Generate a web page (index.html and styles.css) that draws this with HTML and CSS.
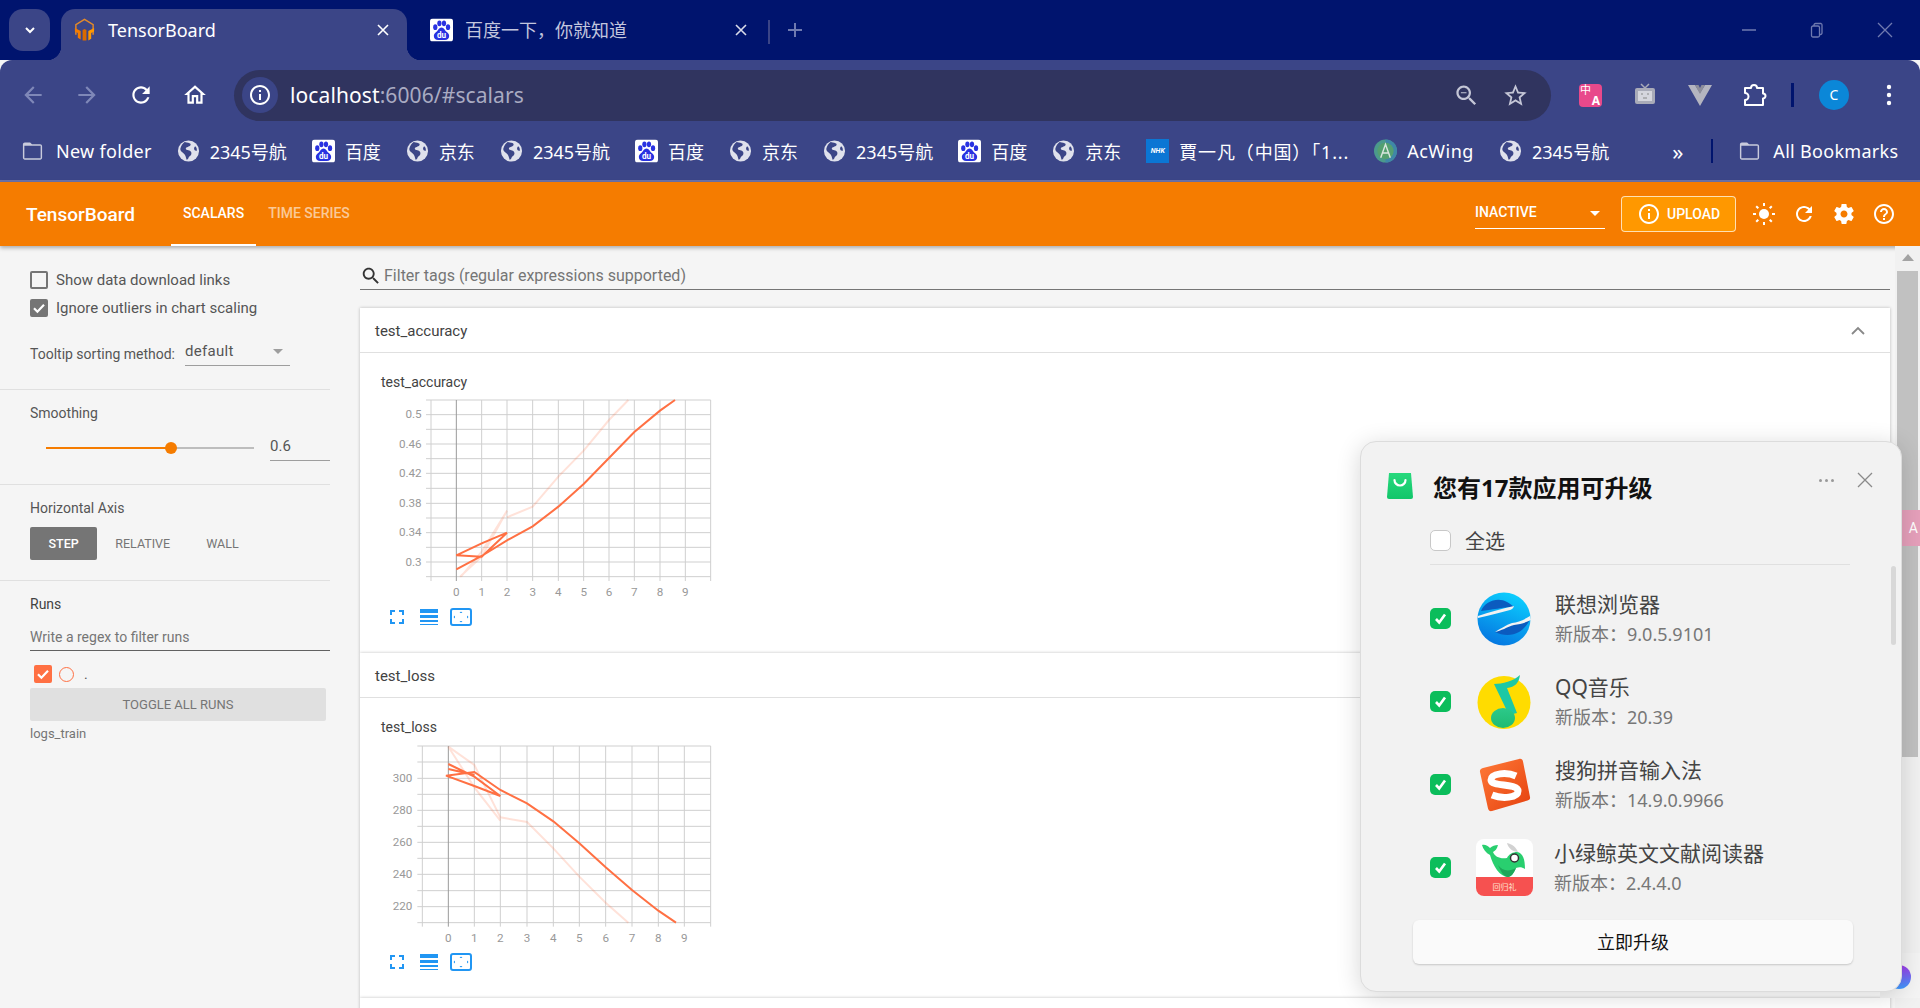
FILE: index.html
```html
<!DOCTYPE html>
<html lang="en">
<head>
    <meta charset="UTF-8">
    <meta name="viewport" content="width=device-width, initial-scale=1.0">
    <title>TensorBoard</title>
    <link rel="stylesheet" href="styles.css">
</head>
<body>
    <svg class="defs" width="0" height="0">
        <symbol id="i-paw" viewBox="0 0 24 24">
            <rect width="24" height="24" rx="3" fill="#fff"/>
            <g fill="#2932e1">
                <ellipse cx="5.500" cy="9" rx="2.200" ry="3"/>
                <ellipse cx="9.800" cy="5" rx="2.200" ry="3"/>
                <ellipse cx="14.600" cy="5" rx="2.200" ry="3"/>
                <ellipse cx="18.800" cy="9" rx="2.200" ry="3"/>
                <path d="M12 9.500c-2.600 0-3.400 3-5.200 4.400C5 15.300 4 16.500 4 18.300 4 21 6 22.500 8.500 22.500h7c2.500 0 4.500-1.500 4.500-4.200 0-1.800-1-3-2.800-4.400C15.400 12.500 14.600 9.500 12 9.500z"/>
            </g>
        </symbol>
        <symbol id="i-globe" viewBox="0 0 24 24">
            <circle cx="12" cy="12" r="11" fill="#dfe1ec"/>
            <path d="M8 2.500c3 1 5 .5 6 2 1 1.800-1.500 3-3.500 3.500-2 .6-1.500 2.500.5 3 2.500.6 4.500 1.500 4 4-.4 2-2.500 2-3 4-.2 1-.8 2-2 2-.8-2.500-1-5-3-6.500C5 13 3 12 3.500 9.500 4 6.500 6 4 8 2.500z" fill="#3b4587"/>
            <path d="M19 7c1.500 1 2 3 1.500 5-1 0-2-.5-2.500-1.500-.5-1.200 0-2.500 1-3.500z" fill="#3b4587"/>
        </symbol>
        <symbol id="i-folder" viewBox="0 0 24 24">
            <path d="M20 5h-8.500l-2-2H4C2.900 3 2 3.900 2 5v14c0 1.100.9 2 2 2h16c1.100 0 2-.9 2-2V7c0-1.100-.9-2-2-2zm.5 14.500h-17v-13h17z" fill="#c9cbdc"/>
        </symbol>
        <symbol id="i-corners" viewBox="0 0 14 14">
            <path d="M1 5V1h4M9 1h4v4M13 9v4H9M5 13H1V9" fill="none" stroke="#2196f3" stroke-width="2"/>
        </symbol>
        <symbol id="i-lines" viewBox="0 0 18 16">
            <rect y="0" width="18" height="4" fill="#2196f3"/>
            <rect y="6" width="18" height="3" fill="#2196f3"/>
            <rect y="11" width="18" height="2" fill="#2196f3"/>
            <rect y="15" width="18" height="1" fill="#2196f3"/>
        </symbol>
        <symbol id="i-fit" viewBox="0 0 22 18">
            <rect x="1" y="1" width="20" height="16" rx="2" fill="none" stroke="#2196f3" stroke-width="2"/>
            <path d="M11 3.500l1.500 1.500h-3zM11 14.500l1.500-1.500h-3zM3.500 9l1.500-1.500v3zM18.500 9l-1.500-1.500v3z" fill="#2196f3"/>
        </symbol>
        <symbol id="i-check" viewBox="0 0 18 18">
            <path d="M4 9.300l3.400 3.400L14 5.800" fill="none" stroke="#fff" stroke-width="2.200"/>
        </symbol>
        <symbol id="i-close" viewBox="0 0 12 12">
            <path d="M1 1l10 10M11 1L1 11" stroke="#fff" stroke-width="1.600"/>
        </symbol>
        <symbol id="i-green" viewBox="0 0 21 21">
            <path d="M6 11l3.200 3.500L15 6.500" fill="none" stroke="#fff" stroke-width="2.600"/>
        </symbol>
    </svg>

    <div class="tabstrip">
        <div class="tab-menu">
            <svg width="14" height="14" viewBox="0 0 14 14"><path d="M3 5l4 4 4-4" fill="none" stroke="#fff" stroke-width="2"/></svg>
        </div>
        <div class="tab tab-active">
            <svg class="tab-icon" viewBox="0 0 24 24">
                <path d="M3 17V6.500L12 1l9 5.500V17" fill="none" stroke="#e38a2a" stroke-width="1.500"/>
                <path d="M2 10l6 3v9l-3-2v-5l-3-1.500z" fill="#f57c00"/>
                <path d="M22 10l-6 3v10l3-2v-6l3-1.500z" fill="#ff9800"/>
                <path d="M10 12l2-1 2 1v11h-4z" fill="#d96a00"/>
            </svg>
            <span class="tab-title">TensorBoard</span>
            <svg class="tab-close"><use href="#i-close"/></svg>
        </div>
        <div class="tab">
            <svg class="tab-icon" viewBox="0 0 24 24"><use href="#i-paw"/><text class="du" x="12" y="20.500">du</text></svg>
            <span class="tab-title tab-title-dim">百度一下，你就知道</span>
            <svg class="tab-close tab-close-dim"><use href="#i-close"/></svg>
        </div>
        <div class="tab-sep"></div>
        <div class="tab-new">
            <svg width="16" height="16" viewBox="0 0 16 16"><path d="M8 1v14M1 8h14" stroke="#6f7ab0" stroke-width="2"/></svg>
        </div>
        <div class="win-controls">
            <svg width="16" height="16" viewBox="0 0 16 16"><path d="M1 8h14" stroke="#6f7ab0" stroke-width="1.500"/></svg>
            <svg width="16" height="16" viewBox="0 0 16 16"><path d="M5 4V3a1.500 1.500 0 0 1 1.500-1.500H12A1.500 1.500 0 0 1 13 3v8a1.500 1.500 0 0 1-1.500 1.500H11M4 4h5a1.500 1.500 0 0 1 1.500 1.500v8A1.500 1.500 0 0 1 9 15H4a1.500 1.500 0 0 1-1.500-1.500v-8A1.500 1.500 0 0 1 4 4z" fill="none" stroke="#6f7ab0" stroke-width="1.300"/></svg>
            <svg width="16" height="16" viewBox="0 0 16 16"><path d="M1 1l14 14M15 1L1 15" stroke="#6f7ab0" stroke-width="1.300"/></svg>
        </div>
    </div>

    <div class="toolbar">
        <div class="nav-row">
            <div class="nav-icons">
                <svg class="nav-icon" viewBox="0 0 24 24"><path fill="#7f88b8" d="M20 11H7.830l5.590-5.590L12 4l-8 8 8 8 1.410-1.410L7.830 13H20v-2z"/></svg>
                <svg class="nav-icon" viewBox="0 0 24 24"><path fill="#7f88b8" d="M4 11h12.170l-5.590-5.590L12 4l8 8-8 8-1.410-1.410L16.170 13H4v-2z"/></svg>
                <svg class="nav-icon" viewBox="0 0 24 24"><path fill="#fff" d="M17.650 6.350C16.200 4.900 14.210 4 12 4c-4.420 0-7.990 3.580-7.990 8s3.570 8 7.990 8c3.730 0 6.840-2.550 7.730-6h-2.080c-.82 2.330-3.040 4-5.650 4-3.310 0-6-2.690-6-6s2.690-6 6-6c1.660 0 3.140.69 4.220 1.780L13 11h7V4l-2.350 2.350z"/></svg>
                <svg class="nav-icon" viewBox="0 0 24 24"><path fill="#fff" d="M12 5.690l5 4.500V18h-2v-6H9v6H7v-7.810l5-4.500M12 3L2 12h3v8h6v-6h2v6h6v-8h3L12 3z"/></svg>
            </div>
            <div class="omnibox">
                <div class="site-info">
                    <svg width="24" height="24" viewBox="0 0 24 24"><path fill="#fff" d="M11 7h2v2h-2zm0 4h2v6h-2zm1-9C6.480 2 2 6.480 2 12s4.480 10 10 10 10-4.480 10-10S17.520 2 12 2zm0 18c-4.410 0-8-3.590-8-8s3.590-8 8-8 8 3.590 8 8-3.590 8-8 8z"/></svg>
                </div>
                <div class="url"><span class="url-host">localhost</span>:6006/#scalars</div>
                <svg class="omni-icon" viewBox="0 0 24 24"><path fill="#c4c6d6" d="M15.500 14h-.79l-.28-.27C15.410 12.590 16 11.110 16 9.500 16 5.910 13.090 3 9.500 3S3 5.910 3 9.500 5.910 16 9.500 16c1.610 0 3.090-.59 4.230-1.570l.27.28v.79l5 4.990L20.490 19l-4.990-5zm-6 0C7.010 14 5 11.990 5 9.500S7.010 5 9.500 5 14 7.010 14 9.500 11.990 14 9.500 14zM7 9h5v1H7z"/></svg>
                <svg class="omni-icon" viewBox="0 0 24 24"><path fill="#c4c6d6" d="M22 9.240l-7.190-.62L12 2 9.190 8.630 2 9.240l5.460 4.730L5.820 21 12 17.270 18.180 21l-1.630-7.030L22 9.240zM12 15.400l-3.760 2.270 1-4.280-3.320-2.880 4.380-.38L12 6.100l1.710 4.040 4.380.38-3.320 2.880 1 4.280L12 15.400z"/></svg>
            </div>
            <div class="ext-icons">
                <div class="ext-translate"><span class="ext-zh">中</span><span class="ext-a">A</span></div>
                <svg class="ext-icon" viewBox="0 0 24 24">
                    <path d="M8 1l4 4 4-4" fill="none" stroke="#a9abb8" stroke-width="1.500"/>
                    <rect x="2" y="5" width="20" height="16" rx="2" fill="#a9abb8"/>
                    <rect x="5" y="8" width="14" height="10" fill="#d5d6dd"/>
                    <path d="M8 11h2M14 11h2M10 15h4" stroke="#888" stroke-width="1.200"/>
                </svg>
                <svg class="ext-icon" viewBox="0 0 24 24">
                    <path d="M0 2h7l5 8 5-8h7L12 23z" fill="#b4b5c0"/>
                    <path d="M7 2h3.500L12 5l1.500-3H17l-5 9z" fill="#8d8e9a"/>
                </svg>
                <svg class="ext-icon" viewBox="0 0 24 24">
                    <path d="M2 5h6a3 3 0 0 1 6 0h6v5.500a2.500 2.500 0 0 1 0 5V22H2v-5a3.500 3.500 0 0 0 0-7z" fill="none" stroke="#fff" stroke-width="2" stroke-linejoin="round"/>
                </svg>
                <div class="ext-sep"></div>
                <div class="avatar">C</div>
                <svg class="ext-dots" viewBox="0 0 6 24"><circle cx="3" cy="4" r="2.200" fill="#fff"/><circle cx="3" cy="12" r="2.200" fill="#fff"/><circle cx="3" cy="20" r="2.200" fill="#fff"/></svg>
            </div>
        </div>
        <div class="bookmarks">
            <div class="bm bm-folder"><svg class="bm-icon"><use href="#i-folder"/></svg><span class="bm-wide">New folder</span></div>
            <div class="bm"><svg class="bm-icon"><use href="#i-globe"/></svg>2345号航</div>
            <div class="bm"><svg class="bm-icon" viewBox="0 0 24 24"><use href="#i-paw"/><text class="du" x="12" y="20.500">du</text></svg>百度</div>
            <div class="bm"><svg class="bm-icon"><use href="#i-globe"/></svg>京东</div>
            <div class="bm"><svg class="bm-icon"><use href="#i-globe"/></svg>2345号航</div>
            <div class="bm"><svg class="bm-icon" viewBox="0 0 24 24"><use href="#i-paw"/><text class="du" x="12" y="20.500">du</text></svg>百度</div>
            <div class="bm"><svg class="bm-icon"><use href="#i-globe"/></svg>京东</div>
            <div class="bm"><svg class="bm-icon"><use href="#i-globe"/></svg>2345号航</div>
            <div class="bm"><svg class="bm-icon" viewBox="0 0 24 24"><use href="#i-paw"/><text class="du" x="12" y="20.500">du</text></svg>百度</div>
            <div class="bm"><svg class="bm-icon"><use href="#i-globe"/></svg>京东</div>
            <div class="bm"><span class="bm-nhk">NHK</span><span class="bm-long">賈一凡（中国）「1...</span></div>
            <div class="bm">
                <svg class="bm-icon" viewBox="0 0 24 24">
                    <circle cx="12" cy="12" r="12" fill="#4b9a8c"/>
                    <path d="M12 0a12 12 0 0 1 12 12c0 6-5 12-12 12z" fill="#3f87a8"/>
                    <circle cx="12" cy="12" r="8.500" fill="#54a070"/>
                    <path d="M7 19l5-14 5 14M9 14h6" fill="none" stroke="#d9e6e0" stroke-width="1.500"/>
                </svg><span class="bm-acwing">AcWing</span>
            </div>
            <div class="bm"><svg class="bm-icon"><use href="#i-globe"/></svg>2345号航</div>
            <div class="bm-more">»</div>
            <div class="bm-sep"></div>
            <div class="bm bm-folder"><svg class="bm-icon"><use href="#i-folder"/></svg><span class="bm-wide">All Bookmarks</span></div>
        </div>
    </div>

    <header class="tb-header">
        <div class="tb-logo">TensorBoard</div>
        <div class="tb-tab tb-tab-active">SCALARS</div>
        <div class="tb-tab">TIME SERIES</div>
        <div class="tb-right">
            <div class="tb-select">INACTIVE<span class="tb-caret"></span></div>
            <div class="tb-upload">
                <svg width="24" height="24" viewBox="0 0 24 24"><path fill="#fff" d="M11 7h2v2h-2zm0 4h2v6h-2zm1-9C6.480 2 2 6.480 2 12s4.480 10 10 10 10-4.480 10-10S17.520 2 12 2zm0 18c-4.410 0-8-3.590-8-8s3.590-8 8-8 8 3.590 8 8-3.590 8-8 8z"/></svg>
                UPLOAD
            </div>
            <svg class="tb-icon" viewBox="0 0 24 24">
                <circle cx="12" cy="12" r="5" fill="#fff"/>
                <path d="M12 1v3M12 20v3M1 12h3M20 12h3M4.200 4.200l2.100 2.100M17.700 17.700l2.100 2.100M4.200 19.800l2.100-2.100M17.700 6.300l2.100-2.100" stroke="#fff" stroke-width="2"/>
            </svg>
            <svg class="tb-icon" viewBox="0 0 24 24"><path fill="#fff" d="M17.650 6.350C16.200 4.900 14.210 4 12 4c-4.420 0-7.990 3.580-7.990 8s3.570 8 7.990 8c3.730 0 6.840-2.550 7.730-6h-2.080c-.82 2.330-3.040 4-5.650 4-3.310 0-6-2.690-6-6s2.690-6 6-6c1.660 0 3.140.69 4.220 1.780L13 11h7V4l-2.350 2.350z"/></svg>
            <svg class="tb-icon" viewBox="0 0 24 24"><path fill="#fff" d="M19.430 12.980c.04-.32.07-.64.07-.98s-.03-.66-.07-.98l2.110-1.650c.19-.15.24-.42.12-.64l-2-3.460c-.12-.22-.39-.3-.61-.22l-2.490 1c-.52-.4-1.080-.73-1.690-.98l-.38-2.650C14.460 2.180 14.250 2 14 2h-4c-.25 0-.46.18-.49.42l-.38 2.650c-.61.25-1.170.59-1.690.98l-2.490-1c-.23-.09-.49 0-.61.22l-2 3.460c-.13.22-.07.49.12.64l2.110 1.650c-.04.32-.07.65-.07.98s.03.66.07.98l-2.110 1.650c-.19.15-.24.42-.12.64l2 3.460c.12.22.39.3.61.22l2.490-1c.52.4 1.080.73 1.690.98l.38 2.650c.03.24.24.42.49.42h4c.25 0 .46-.18.49-.42l.38-2.650c.61-.25 1.170-.59 1.690-.98l2.490 1c.23.09.49 0 .61-.22l2-3.460c.12-.22.07-.49-.12-.64l-2.110-1.650zM12 15.500c-1.930 0-3.500-1.570-3.500-3.500s1.570-3.500 3.500-3.500 3.500 1.570 3.500 3.500-1.570 3.500-3.500 3.500z"/></svg>
            <svg class="tb-icon" viewBox="0 0 24 24"><path fill="#fff" d="M11 18h2v-2h-2v2zm1-16C6.480 2 2 6.480 2 12s4.480 10 10 10 10-4.480 10-10S17.520 2 12 2zm0 18c-4.410 0-8-3.590-8-8s3.590-8 8-8 8 3.590 8 8-3.590 8-8 8zm0-14c-2.210 0-4 1.790-4 4h2c0-1.100.9-2 2-2s2 .9 2 2c0 2-3 1.750-3 5h2c0-2.250 3-2.500 3-5 0-2.210-1.790-4-4-4z"/></svg>
        </div>
    </header>

    <main class="tb-main">
        <aside class="sidebar">
            <section class="side-sec side-first">
                <label class="side-check"><span class="box"></span>Show data download links</label>
                <label class="side-check"><span class="box box-on"><svg><use href="#i-check"/></svg></span>Ignore outliers in chart scaling</label>
                <div class="tooltip-row">
                    <span class="tooltip-label">Tooltip sorting method:</span>
                    <div class="tooltip-select">default<span class="tooltip-caret"></span></div>
                </div>
            </section>
            <section class="side-sec">
                <div class="side-label">Smoothing</div>
                <div class="slider-row">
                    <div class="slider"><div class="slider-fill" style="width: 60%"></div></div>
                    <div class="slider-value">0.6</div>
                </div>
            </section>
            <section class="side-sec">
                <div class="side-label">Horizontal Axis</div>
                <div class="axis-btns">
                    <div class="axis-btn axis-btn-on">STEP</div>
                    <div class="axis-btn">RELATIVE</div>
                    <div class="axis-btn">WALL</div>
                </div>
            </section>
            <section class="side-sec side-last">
                <div class="side-label side-label-dark">Runs</div>
                <div class="runs-filter">Write a regex to filter runs</div>
                <div class="run-row">
                    <span class="box box-run"><svg><use href="#i-check"/></svg></span>
                    <span class="run-dot"></span>
                    <span class="run-name">.</span>
                </div>
                <div class="toggle-runs">TOGGLE ALL RUNS</div>
                <div class="run-foot">logs_train</div>
            </section>
        </aside>

        <div class="content">
            <div class="tag-filter">
                <svg width="22" height="22" viewBox="0 0 24 24"><path fill="#333" d="M15.500 14h-.79l-.28-.27C15.410 12.590 16 11.110 16 9.500 16 5.910 13.090 3 9.500 3S3 5.910 3 9.500 5.910 16 9.500 16c1.610 0 3.090-.59 4.230-1.570l.27.28v.79l5 4.990L20.490 19l-4.990-5zm-6 0C7.010 14 5 11.990 5 9.500S7.010 5 9.500 5 14 7.010 14 9.500 11.990 14 9.500 14z"/></svg>
                Filter tags (regular expressions supported)
            </div>

            <div class="card">
                <div class="card-head">test_accuracy
                    <svg class="card-chevron" width="14" height="10" viewBox="0 0 14 10"><path d="M1 8l6-6 6 6" fill="none" stroke="#888" stroke-width="1.800"/></svg>
                </div>
                <div class="card-body">
                    <div class="chart-title">test_accuracy</div>
                    <!-- viewBox units are 1/3 px -->
                    <svg class="chart" viewBox="0 105 1140 630">
                        <path class="grid" d="M213 120V663M365 120V663M441 120V663M518 120V663M595 120V663M671 120V663M747 120V663M823 120V663M900 120V663M976 120V663M1052 120V663M198 120H1052M198 164H1052M198 208H1052M198 252H1052M198 296H1052M198 340H1052M198 385H1052M198 430H1052M198 474H1052M198 518H1052M198 562H1052M198 606H1052M198 650H1052"/>
                        <path class="axis" d="M289 120V663"/>
                        <g class="labels-y">
                            <text x="185" y="175">0.5</text><text x="185" y="263">0.46</text><text x="185" y="351">0.42</text><text x="185" y="441">0.38</text><text x="185" y="529">0.34</text><text x="185" y="617">0.3</text>
                        </g>
                        <g class="labels-x">
                            <text x="289" y="707">0</text><text x="365" y="707">1</text><text x="441" y="707">2</text><text x="518" y="707">3</text><text x="595" y="707">4</text><text x="671" y="707">5</text><text x="747" y="707">6</text><text x="823" y="707">7</text><text x="900" y="707">8</text><text x="976" y="707">9</text>
                        </g>
                        <path class="line-raw" d="M303 650L365 575L441 452L365 590L300 650M441 472L518 440L595 350L671 272L747 180L805 120"/>
                        <path class="line" d="M289 628L365 588L441 541L518 499L595 440L671 372L747 294L823 216L900 152L945 120M441 518L365 550L289 586L365 590L441 518"/>
                    </svg>
                    <div class="chart-actions">
                        <svg class="act-corners"><use href="#i-corners"/></svg>
                        <svg class="act-lines"><use href="#i-lines"/></svg>
                        <svg class="act-fit"><use href="#i-fit"/></svg>
                    </div>
                </div>
            </div>

            <div class="card">
                <div class="card-head">test_loss</div>
                <div class="card-body">
                    <div class="chart-title">test_loss</div>
                    <svg class="chart" viewBox="0 120 1140 630">
                        <path class="grid" d="M187 138V680M343 138V680M421 138V680M501 138V680M580 138V680M658 138V680M737 138V680M816 138V680M895 138V680M973 138V680M1052 138V680M172 138H1052M172 186H1052M172 235H1052M172 283H1052M172 331H1052M172 379H1052M172 427H1052M172 475H1052M172 523H1052M172 572H1052M172 620H1052M172 668H1052"/>
                        <path class="axis" d="M265 138V680"/>
                        <g class="labels-y">
                            <text x="157" y="246">300</text><text x="157" y="342">280</text><text x="157" y="438">260</text><text x="157" y="534">240</text><text x="157" y="631">220</text>
                        </g>
                        <g class="labels-x">
                            <text x="265" y="725">0</text><text x="343" y="725">1</text><text x="421" y="725">2</text><text x="501" y="725">3</text><text x="580" y="725">4</text><text x="658" y="725">5</text><text x="737" y="725">6</text><text x="816" y="725">7</text><text x="895" y="725">8</text><text x="973" y="725">9</text>
                        </g>
                        <path class="line-raw" d="M265 140L343 195L421 352L501 366L580 445L658 530L737 608L805 668M265 140L343 262L421 362"/>
                        <path class="line" d="M265 192L343 230L421 288L343 258L258 227L343 216L421 270L501 310L580 364L658 430L737 502L816 570L895 632L948 668M265 207L343 225"/>
                    </svg>
                    <div class="chart-actions">
                        <svg class="act-corners"><use href="#i-corners"/></svg>
                        <svg class="act-lines"><use href="#i-lines"/></svg>
                        <svg class="act-fit"><use href="#i-fit"/></svg>
                    </div>
                </div>
            </div>
            <div class="card"><div class="card-head"></div></div>
        </div>

        <div class="scrollrail">
            <div class="scroll-up"></div>
            <div class="scroll-thumb"></div>
        </div>
    </main>

    <div class="float-translate">A</div>
    <div class="float-helper"><span class="float-blob"></span></div>

    <div class="upgrade">
        <div class="up-head">
            <svg class="up-bag" viewBox="0 0 26 26">
                <defs><linearGradient id="g-bag" x1="0" y1="0" x2="0" y2="1"><stop offset="0" stop-color="#27d97d"/><stop offset="1" stop-color="#12c66a"/></linearGradient></defs>
                <path d="M2 0h22l2 24a2 2 0 0 1-2 2H2a2 2 0 0 1-2-2z" fill="url(#g-bag)"/>
                <path d="M7.500 7a5.500 5.500 0 0 0 11 0" fill="none" stroke="#fff" stroke-width="2.200" stroke-linecap="round"/>
            </svg>
            <div class="up-title">您有17款应用可升级</div>
            <div class="up-dots"><i></i><i></i><i></i></div>
            <svg class="up-close" viewBox="0 0 16 16"><path d="M1 1l14 14M15 1L1 15" stroke="#8a8a8a" stroke-width="1.300"/></svg>
        </div>
        <div class="up-all">
            <span class="up-box"></span>全选
        </div>
        <div class="up-bar"></div>
        <div class="up-row">
            <span class="up-check"><svg><use href="#i-green"/></svg></span>
            <svg class="up-icon" viewBox="0 0 54 54">
                <defs><linearGradient id="g-lenovo" x1="0.700" y1="0" x2="0.300" y2="1"><stop offset="0" stop-color="#0bd0ff"/><stop offset="1" stop-color="#0575e0"/></linearGradient></defs>
                <circle cx="27" cy="27" r="26.500" fill="url(#g-lenovo)"/>
                <path d="M4 19C8 9 21 5 30 10c3 2 5 3 7 5-11 0-23 3-33 4z" fill="#0b5bbf"/>
                <path d="M18 40c8 4 17 4 24 0 5-3 9-8 11-13-6 3-12 4-17 5-7 2-12 6-18 8z" fill="#0b5bbf"/>
                <path d="M1 24C12 20 24 17 37 14c-1 3-2 3-4 4-10 3-20 5-32 8z" fill="#f2f2f2"/>
                <path d="M18 40c5-3 11-7 17-9 6-1 12-3 18-7l1 4c-6 3-11 4-17 5-7 2-13 6-19 7z" fill="#f2f2f2"/>
            </svg>
            <div class="up-text"><div class="up-name">联想浏览器</div><div class="up-ver">新版本：9.0.5.9101</div></div>
        </div>
        <div class="up-row">
            <span class="up-check"><svg><use href="#i-green"/></svg></span>
            <svg class="up-icon" viewBox="0 0 54 54">
                <defs><linearGradient id="g-qq" x1="0" y1="0" x2="0" y2="1"><stop offset="0" stop-color="#2cc98a"/><stop offset="1" stop-color="#1fbb72"/></linearGradient></defs>
                <circle cx="27" cy="27.500" r="26.500" fill="#ffdc00"/>
                <path d="M17 9C25 9 37 6 43 0 42 8 38 12 30 13L40 38 32 40z" fill="#1cc8a5"/>
                <ellipse cx="26" cy="43" rx="12" ry="10" fill="url(#g-qq)"/>
            </svg>
            <div class="up-text"><div class="up-name">QQ音乐</div><div class="up-ver">新版本：20.39</div></div>
        </div>
        <div class="up-row">
            <span class="up-check"><svg><use href="#i-green"/></svg></span>
            <svg class="up-icon" viewBox="0 0 54 54">
                <defs><linearGradient id="g-sogou" x1="0" y1="0" x2="1" y2="1"><stop offset="0" stop-color="#ff7a38"/><stop offset="1" stop-color="#e5410f"/></linearGradient></defs>
                <path d="M6 10L42 1c2.500-.5 3.500.5 4 2.500L53 39c.4 2-.5 3-2.500 3.500L15 53c-2 .5-3.500-.5-4-2.500L3 14c-.4-2 .8-3.500 3-4z" fill="url(#g-sogou)"/>
                <path d="M39 18C30 14 14 15 14 22c0 7 27 3 27 11 0 7-16 8-26 4" fill="none" stroke="#fff" stroke-width="7"/>
            </svg>
            <div class="up-text"><div class="up-name">搜狗拼音输入法</div><div class="up-ver">新版本：14.9.0.9966</div></div>
        </div>
        <div class="up-row">
            <span class="up-check"><svg><use href="#i-green"/></svg></span>
            <div class="up-whale">
                <svg viewBox="0 0 57 38" class="up-whale-art">
                    <path d="M6 6C9 5 12 7 14 9 16 7 19 6 22 6 21 10 19 12 17 13 19 18 24 20 31 19 33 15 37 13 41 13 47 14 49 20 49 30 46 28 43 28 40 29 38 34 35 38 32 38 24 38 17 27 14 16 10 14 7 10 6 6z" fill="#29cf6f"/>
                    <path d="M22 26C26 32 33 33 40 29 38 34 35 38 32 38 28 38 25 33 22 26z" fill="#1ea65a"/>
                    <path d="M31 4c5 1 9 4 11 9-5 0-10-4-11-9z" fill="#d2d2d2"/>
                    <circle cx="38.500" cy="19" r="4" fill="#fff" stroke="#333" stroke-width="1.500"/>
                </svg>
                <div class="up-whale-band">回归礼</div>
            </div>
            <div class="up-text"><div class="up-name">小绿鲸英文文献阅读器</div><div class="up-ver">新版本：2.4.4.0</div></div>
        </div>
        <div class="up-btn">立即升级</div>
        <div class="up-scroll"></div>
    </div>
</body>
</html>
```

FILE: styles.css
```css
* {
    box-sizing: border-box;
}

html, body {
    margin: 0;
    height: 100%;
}

body {
    position: relative;
    display: flex;
    flex-direction: column;
    height: 1008px;
    overflow: hidden;
    font-family: Roboto, "Noto Sans CJK SC", sans-serif;
    background-color: #f5f5f5;
}

.defs {
    position: absolute;
}

/* browser chrome */
.tabstrip {
    display: flex;
    height: 60px;
    padding-top: 9px;
    background-color: #00146e;
    font-family: "Noto Sans", "Noto Sans CJK SC", sans-serif;
    flex-shrink: 0;
}

.tab-menu {
    display: flex;
    justify-content: center;
    align-items: center;
    width: 41px;
    height: 42px;
    margin-left: 9px;
    border-radius: 14px;
    background-color: #3b4587;
}

.tab {
    position: relative;
    display: flex;
    align-items: center;
    width: 346px;
    margin-left: 11px;
    padding: 0 18px 9px 12px;
    color: #fff;
    font-size: 18px;
}

.tab + .tab {
    margin-left: 11px;
    width: 347px;
}

.tab-active {
    border-radius: 14px 14px 0 0;
    background-color: #3b4587;
}

.tab-active::before,
.tab-active::after {
    content: "";
    position: absolute;
    bottom: 0;
    width: 14px;
    height: 14px;
}

.tab-active::before {
    left: -14px;
    background: radial-gradient(circle at 0 0, transparent 14px, #3b4587 14.500px);
}

.tab-active::after {
    right: -14px;
    background: radial-gradient(circle at 100% 0, transparent 14px, #3b4587 14.500px);
}

.tab-icon {
    width: 23px;
    height: 24px;
    margin-right: 12px;
    flex-shrink: 0;
}

.tab-title {
    flex: 1;
    line-height: 24px;
    white-space: nowrap;
}

.tab-title-dim {
    color: #c3c6de;
}

.tab-close {
    width: 12px;
    height: 12px;
}

.tab-close-dim {
    opacity: 0.85;
}

.du {
    fill: #fff;
    font-family: Roboto, sans-serif;
    font-size: 8.500px;
    font-weight: 700;
    text-anchor: middle;
}

.tab-sep {
    width: 2px;
    height: 24px;
    margin: 11px 0 0 3px;
    background-color: #3b4587;
}

.tab-new {
    display: flex;
    align-items: center;
    height: 42px;
    margin-left: 17px;
}

.win-controls {
    display: flex;
    align-items: center;
    gap: 52px;
    height: 42px;
    margin-left: auto;
    padding-right: 27px;
}

.toolbar {
    display: flex;
    flex-direction: column;
    height: 122px;
    border-bottom: 2px solid #6a72a8;
    border-radius: 12px 12px 0 0;
    background-color: #3b4587;
    color: #fff;
    font-family: "Noto Sans", "Noto Sans CJK SC", sans-serif;
    flex-shrink: 0;
}

.nav-row {
    display: flex;
    align-items: center;
    height: 70px;
    flex-shrink: 0;
}

.nav-icons {
    display: flex;
    gap: 28px;
    width: 234px;
    padding-left: 20px;
}

.nav-icon {
    width: 26px;
    height: 26px;
}

.omnibox {
    display: flex;
    align-items: center;
    width: 1317px;
    height: 51px;
    padding: 0 22px 0 8px;
    border-radius: 26px;
    background-color: #30345f;
}

.site-info {
    display: flex;
    justify-content: center;
    align-items: center;
    width: 36px;
    height: 36px;
    border-radius: 50%;
    background-color: #3b4587;
}

.url {
    flex: 1;
    margin-left: 12px;
    font-size: 21px;
    letter-spacing: 0.1px;
    color: #a9abc2;
}

.url-host {
    color: #fff;
}

.omni-icon {
    width: 27px;
    height: 27px;
    margin-left: 22px;
}

.ext-icons {
    display: flex;
    align-items: center;
    flex: 1;
    padding-left: 28px;
}

.ext-translate {
    position: relative;
    width: 23px;
    height: 23px;
    border-radius: 4px;
    background-color: #e8498b;
    color: #fff;
}

.ext-zh {
    position: absolute;
    top: 0;
    left: 1px;
    font-size: 11px;
    line-height: 12px;
}

.ext-a {
    position: absolute;
    right: 2px;
    bottom: 0;
    font-size: 12px;
    font-weight: 700;
    line-height: 13px;
}

.ext-icon {
    width: 24px;
    height: 24px;
    margin-left: 31px;
}

.ext-sep {
    width: 3px;
    height: 24px;
    margin-left: 24px;
    background-color: #00146e;
}

.avatar {
    width: 30px;
    height: 30px;
    margin-left: 25px;
    border-radius: 50%;
    background-color: #0b87d8;
    color: #fff;
    font-size: 14px;
    line-height: 30px;
    text-align: center;
}

.ext-dots {
    width: 6px;
    height: 24px;
    margin-left: 37px;
}

.bookmarks {
    display: flex;
    align-items: center;
    gap: 25px;
    flex: 1;
    padding: 0 0 8px 21px;
    font-size: 18px;
    white-space: nowrap;
}

.bm {
    display: flex;
    align-items: center;
    gap: 10px;
}

.bm-folder {
    gap: 12px;
}

.bm-wide {
    letter-spacing: 0.3px;
}

.bm-acwing {
    letter-spacing: 0.5px;
}

.bm-long {
    letter-spacing: 0.85px;
}

.bm-icon {
    width: 23px;
    height: 24px;
}

.bm-nhk {
    width: 23px;
    height: 24px;
    background-color: #0b76d4;
    color: #fff;
    font: italic 700 7px/24px Roboto, sans-serif;
    text-align: center;
}

.bm-more {
    margin-left: 38px;
    font-size: 22px;
    line-height: 22px;
}

.bm-sep {
    width: 2px;
    height: 24px;
    margin-left: 3px;
    background-color: #00146e;
}

/* tensorboard header */
.tb-header {
    position: relative;
    display: flex;
    align-items: center;
    height: 64px;
    padding-left: 26px;
    background-color: #f57c00;
    color: #fff;
    box-shadow: 0 2px 4px rgba(0,0,0,0.3);
    flex-shrink: 0;
}

.tb-logo {
    width: 145px;
    font-size: 19px;
    font-weight: 500;
}

.tb-tab {
    display: flex;
    align-items: center;
    height: 64px;
    padding: 0 12px;
    border-bottom: 2px solid transparent;
    font-size: 14px;
    font-weight: 500;
    color: rgba(255,255,255,0.6);
}

.tb-tab-active {
    color: #fff;
    border-bottom-color: #fff;
}

.tb-right {
    display: flex;
    align-items: center;
    margin-left: auto;
    padding-right: 24px;
}

.tb-select {
    position: relative;
    width: 130px;
    height: 30px;
    border-bottom: 1px solid #fff;
    font-size: 14px;
    font-weight: 500;
    line-height: 27px;
}

.tb-caret {
    position: absolute;
    top: 12px;
    right: 5px;
    border-left: 5px solid transparent;
    border-right: 5px solid transparent;
    border-top: 5px solid #fff;
}

.tb-upload {
    display: flex;
    align-items: center;
    gap: 6px;
    width: 115px;
    height: 36px;
    margin: 0 16px;
    padding-left: 15px;
    border: 1px solid rgba(255,255,255,0.7);
    border-radius: 4px;
    background-color: #ff9800;
    font-size: 14px;
    font-weight: 500;
}

.tb-icon {
    width: 24px;
    height: 24px;
    margin-right: 16px;
}

.tb-icon:last-child {
    margin-right: 0;
}

/* main area */
.tb-main {
    display: flex;
    flex: 1;
    min-height: 0;
}

.sidebar {
    width: 340px;
    flex-shrink: 0;
    font-size: 14px;
    color: #555;
}

.side-sec {
    width: 330px;
    padding: 15px 0 20px 30px;
    border-bottom: 1px solid #e0e0e0;
}

.side-first {
    padding-top: 25px;
    padding-bottom: 23px;
}

.side-last {
    border-bottom: none;
}

.side-check {
    display: flex;
    align-items: center;
    gap: 8px;
    height: 18px;
    margin-bottom: 10px;
    font-size: 15px;
}

.box {
    display: block;
    width: 18px;
    height: 18px;
    border: 2px solid #757575;
    border-radius: 2px;
}

.box svg {
    display: block;
    width: 18px;
    height: 18px;
    margin: -2px;
}

.box-on {
    background-color: #757575;
}

.tooltip-row {
    display: flex;
    align-items: flex-end;
    margin-top: 24px;
}

.tooltip-label {
    width: 155px;
    padding-bottom: 4px;
    white-space: nowrap;
}

.tooltip-select {
    position: relative;
    width: 105px;
    height: 25px;
    border-bottom: 1px solid #9e9e9e;
    font-size: 15px;
    line-height: 20px;
    letter-spacing: 0.3px;
}

.tooltip-caret {
    position: absolute;
    top: 8px;
    right: 7px;
    border-left: 5px solid transparent;
    border-right: 5px solid transparent;
    border-top: 5px solid #9e9e9e;
}

.side-label {
    height: 16px;
    line-height: 16px;
}

.side-label-dark {
    color: #424242;
}

.slider-row {
    display: flex;
    align-items: flex-start;
    height: 27px;
    margin-top: 13px;
    margin-bottom: 3px;
}

.slider {
    position: relative;
    width: 208px;
    height: 2px;
    margin: 13px 16px 0;
    background-color: #bdbdbd;
}

.slider-fill {
    position: relative;
    height: 2px;
    background-color: #f57c00;
}

.slider-fill::after {
    content: "";
    position: absolute;
    top: -5px;
    right: -6px;
    width: 12px;
    height: 12px;
    border-radius: 50%;
    background-color: #f57c00;
}

.slider-value {
    width: 60px;
    height: 27px;
    border-bottom: 1px solid #9e9e9e;
    font-size: 15px;
    line-height: 24px;
}

.axis-btns {
    display: flex;
    margin-top: 11px;
}

.axis-btn {
    height: 33px;
    padding: 0 18px;
    border-radius: 2px;
    color: #757575;
    font-size: 12.500px;
    line-height: 34px;
}

.axis-btn-on {
    padding: 0 18.500px;
    background-color: #757575;
    color: #fff;
    font-weight: 500;
}

.runs-filter {
    height: 26px;
    margin-top: 13px;
    border-bottom: 1px solid #616161;
    color: #757575;
    line-height: 25px;
}

.run-row {
    display: flex;
    align-items: center;
    height: 18px;
    margin-top: 14px;
    padding-left: 4px;
}

.box-run {
    border-color: #ff7043;
    background-color: #ff7043;
}

.run-dot {
    width: 15px;
    height: 15px;
    margin-left: 7px;
    border: 1.500px solid #ff7043;
    border-radius: 50%;
}

.run-name {
    margin-left: 10px;
}

.toggle-runs {
    width: 296px;
    height: 33px;
    margin-top: 5px;
    border-radius: 2px;
    background-color: #e0e0e0;
    color: #757575;
    font-size: 13px;
    line-height: 34px;
    text-align: center;
}

.run-foot {
    margin-top: 5px;
    color: #757575;
    font-size: 13px;
    line-height: 16px;
}

.content {
    flex: 1;
    min-width: 0;
    padding: 0 5px 0 20px;
}

.tag-filter {
    display: flex;
    align-items: center;
    gap: 2px;
    height: 44px;
    padding-top: 16px;
    border-bottom: 1px solid #757575;
    margin-bottom: 18px;
    font-size: 16px;
    color: #757575;
}

.card {
    background-color: #fff;
    box-shadow: 0 0 3px rgba(0,0,0,0.25);
}

.card-head {
    display: flex;
    align-items: center;
    justify-content: space-between;
    height: 45px;
    padding: 2px 25px 0 15px;
    border-bottom: 1px solid #e0e0e0;
    font-size: 15px;
    color: #424242;
}

.card-body {
    height: 300px;
    padding-top: 19px;
}

.chart-title {
    padding-left: 21px;
    color: #424242;
    font-size: 14px;
    line-height: 20px;
}

.chart {
    display: block;
    width: 380px;
    height: 210px;
    margin-top: 3px;
}

.grid {
    fill: none;
    stroke: #cfcfcf;
    stroke-width: 3;
}

.axis {
    stroke: #9a9a9a;
    stroke-width: 3;
}

.labels-y text,
.labels-x text {
    fill: #999;
    font-size: 35px;
}

.labels-y text {
    text-anchor: end;
}

.labels-x text {
    text-anchor: middle;
}

.line,
.line-raw {
    fill: none;
    stroke: #ff7043;
    stroke-width: 6;
}

.line-raw {
    stroke-opacity: 0.2;
}

.chart-actions {
    display: flex;
    align-items: center;
    gap: 16px;
    height: 24px;
    padding-left: 30px;
}

.act-corners {
    width: 14px;
    height: 14px;
}

.act-lines {
    width: 18px;
    height: 16px;
}

.act-fit {
    width: 22px;
    height: 18px;
    margin-left: -4px;
}

.scrollrail {
    position: relative;
    width: 25px;
    padding-left: 2px;
    padding-right: 2px;
    background-color: #f1f1f1;
}

.scroll-up {
    width: 0;
    margin: 8px auto 0;
    border-left: 6px solid transparent;
    border-right: 6px solid transparent;
    border-bottom: 7px solid #a3a3a3;
}

.scroll-thumb {
    height: 486px;
    margin-top: 10px;
    background-color: #c1c1c1;
}

/* things floating over the page */
.float-translate {
    position: absolute;
    top: 510px;
    right: 0;
    width: 24px;
    height: 36px;
    background-color: #e6a0bb;
    color: #fff;
    font-size: 14px;
    line-height: 36px;
    text-align: right;
    padding-right: 2px;
}

.float-helper {
    position: absolute;
    top: 953px;
    right: 0;
    width: 40px;
    height: 45px;
    background-color: #f4f4f4;
}

.float-blob {
    position: absolute;
    top: 12px;
    left: 7px;
    width: 24px;
    height: 24px;
    border-radius: 50%;
    background: linear-gradient(#a13be8, #3f9bff);
}

.upgrade {
    position: absolute;
    top: 441px;
    left: 1360px;
    width: 542px;
    height: 551px;
    border: 1px solid #dcdcdc;
    border-radius: 16px;
    background-color: #f2f2f2;
    box-shadow: 0 4px 24px rgba(0,0,0,0.16);
    color: #333;
    font-family: "Noto Sans", "Noto Sans CJK SC", sans-serif;
}

.up-head {
    position: relative;
    display: flex;
    align-items: center;
    height: 57px;
    padding: 0 0 31px 26px;
    margin-top: 31px;
}

.up-bag {
    width: 26px;
    height: 26px;
}

.up-title {
    margin-left: 20px;
    color: #111;
    font-size: 24px;
    font-weight: 700;
}

.up-dots {
    position: absolute;
    top: 6px;
    left: 458px;
    display: flex;
    gap: 3px;
}

.up-dots i {
    width: 3px;
    height: 3px;
    border-radius: 50%;
    background-color: #999;
}

.up-close {
    position: absolute;
    top: -1px;
    left: 496px;
    width: 16px;
    height: 16px;
}

.up-all {
    display: flex;
    align-items: center;
    gap: 14px;
    height: 22px;
    margin-top: -1px;
    padding-left: 69px;
    font-size: 20px;
    color: #444;
}

.up-box {
    width: 21px;
    height: 21px;
    border: 1px solid #c8c8c8;
    border-radius: 5px;
    background-color: #fff;
}

.up-bar {
    height: 1px;
    margin: 13px 51px 12px 69px;
    background-color: #e0e0e0;
}

.up-row {
    display: flex;
    align-items: center;
    height: 83px;
    padding-left: 69px;
}

.up-check {
    width: 21px;
    height: 21px;
    border-radius: 5px;
    background-color: #0bbd5b;
}

.up-check svg {
    display: block;
    width: 21px;
    height: 21px;
}

.up-icon {
    width: 54px;
    height: 54px;
    margin-left: 26px;
    flex-shrink: 0;
}

.up-whale {
    display: flex;
    flex-direction: column;
    width: 57px;
    height: 57px;
    margin-left: 25px;
    margin-right: -3px;
    border-radius: 8px;
    background-color: #fff;
    overflow: hidden;
    flex-shrink: 0;
}

.up-whale-art {
    display: block;
    width: 57px;
    height: 38px;
}

.up-whale-band {
    flex: 1;
    background-color: #f65150;
    color: #ffe2d0;
    font-size: 8px;
    line-height: 19px;
    text-align: center;
}

.up-text {
    margin-left: 24px;
    padding-top: 1px;
}

.up-name {
    font-size: 21px;
    line-height: 28px;
    color: #444;
}

.up-ver {
    margin-top: 3px;
    font-size: 18px;
    line-height: 27px;
    color: #777;
}

.up-btn {
    width: 440px;
    height: 44px;
    margin: 11px 0 0 52px;
    border-radius: 6px;
    background-color: #fafafa;
    box-shadow: 0 1px 2px rgba(0,0,0,0.18);
    color: #111;
    font-size: 18px;
    line-height: 44px;
    text-align: center;
}

.up-scroll {
    position: absolute;
    top: 124px;
    left: 530px;
    width: 5px;
    height: 79px;
    border-radius: 3px;
    background-color: #d8d8d8;
}
```
